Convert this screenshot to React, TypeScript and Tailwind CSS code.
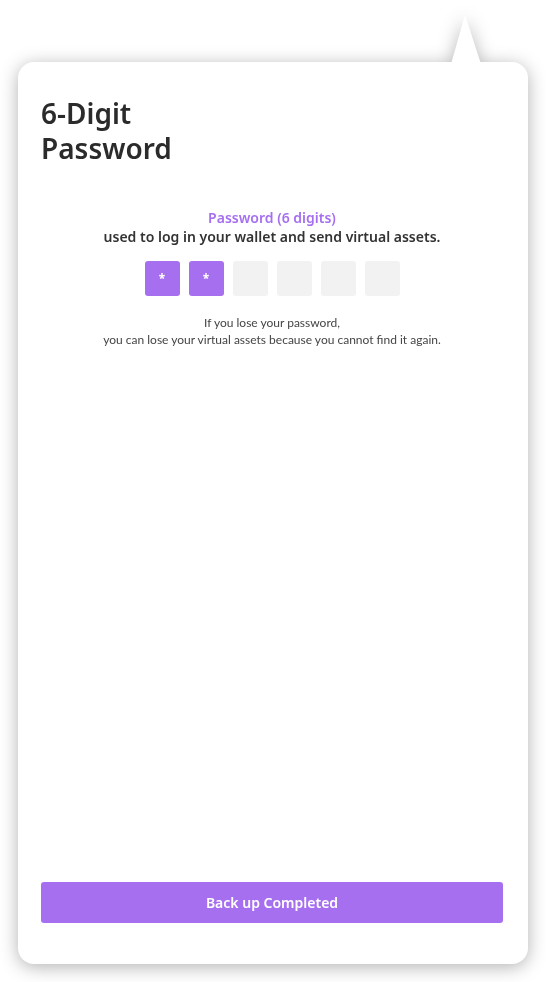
const digits = ['*', '*', '', '', '', ''];

export default function App() {
  return (
    <div className="min-h-[982px] w-[546px] bg-white font-['Source_Sans_Pro','Noto_Sans',sans-serif]">
      {/* Bubble: tail + card share one drop shadow */}
      <div className="flex flex-col pt-[15px] pl-[18px] drop-shadow-[0_3px_9px_rgba(0,0,0,0.3)]">
        <svg width="30" height="48" viewBox="0 0 30 48" className="ml-[433px] -mb-px block">
          <polygon points="14,0 30,49 0,49" fill="#ffffff" />
        </svg>
        <div className="flex h-[902px] w-[510px] flex-col rounded-[16px] bg-white pl-[23px] pr-[25px] pb-[41px]">
          <h1 className="mt-[34px] text-[28px] font-semibold leading-[35px] text-[#2b2b2b]">
            6-Digit
            <br />
            Password
          </h1>

          <div className="mt-[42px] flex flex-col items-center text-center">
            <p className="text-[14px] font-semibold leading-[19px] text-[#a66ff0]">Password (6 digits)</p>
            <p className="text-[14px] font-semibold leading-[19px] text-[#333333]">
              used to log in your wallet and send virtual assets.
            </p>

            <div className="mt-[15px] flex gap-[9px]">
              {digits.map((d, i) => (
                <div
                  key={i}
                  className={
                    d
                      ? 'flex h-[35px] w-[35px] items-center justify-center rounded-[3px] bg-[#a66ff0] text-[12px] font-bold text-white'
                      : 'h-[35px] w-[35px] rounded-[3px] bg-[#f2f2f2]'
                  }
                >
                  {d}
                </div>
              ))}
            </div>

            <p className="mt-[18px] font-['Lato',sans-serif] text-[12px] leading-[17px] text-[#444444]">
              If you lose your password,
              <br />
              you can lose your virtual assets because you cannot find it again.
            </p>
          </div>

          <button className="mt-auto h-[41px] w-full rounded-[3px] bg-[#a66ff0] text-[14px] font-semibold text-white">
            Back up Completed
          </button>
        </div>
      </div>
    </div>
  );
}
